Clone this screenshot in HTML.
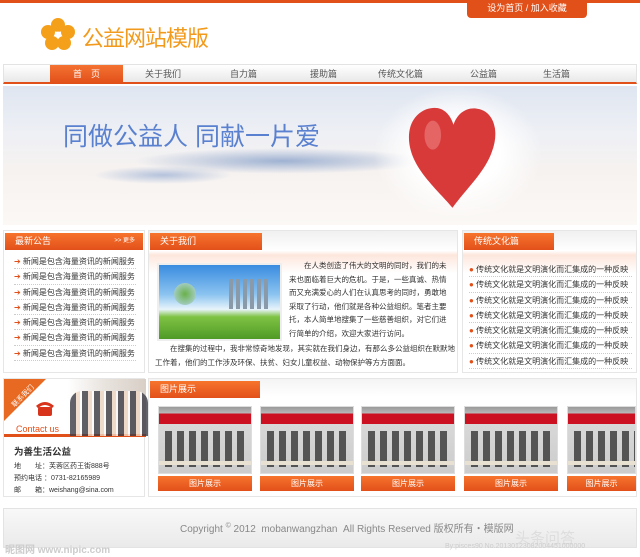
<!DOCTYPE html>
<html><head><meta charset="utf-8"><style>
*{margin:0;padding:0;box-sizing:border-box}
body{width:640px;height:557px;overflow:hidden;background:#fff;font-family:"Liberation Sans","Noto Sans CJK SC",sans-serif;position:relative;font-size:8px;color:#333}
.a{position:absolute}
.hd{background:linear-gradient(#f7742d,#e2501a);color:#fff;font-size:9px;line-height:17px;padding-left:10px}
.box{border:1px solid #e6e6e6;background:#fff}
.li{height:15.3px;border-bottom:1px dotted #ccc;line-height:15px;font-size:8px;color:#333;white-space:nowrap;overflow:hidden}
.pic{width:94px;height:85px}
.ph{height:68px;background:linear-gradient(#999 0,#bbb 10%,#c12 10%,#c12 26%,#d8d8d8 26%,#ccc 100%);position:relative;overflow:hidden;border:1px solid #ddd}
.ph:after{content:"";position:absolute;left:6px;top:24px;width:80px;height:36px;background:repeating-linear-gradient(90deg,#2a2a2a 0 7px,transparent 7px 12px);opacity:.75}
.ph:before{content:"";position:absolute;left:0;top:54px;width:100%;height:4px;background:#e8e0d0;z-index:2}
.cap{height:15px;background:linear-gradient(#f7742d,#e2501a);color:#fff;text-align:center;line-height:15px;font-size:8px;margin-top:2px}
</style></head><body>
<div class="a" style="left:0;top:0;width:640px;height:3px;background:#e2501a"></div>
<div class="a" style="left:467px;top:0;width:120px;height:18px;background:#e2501a;border-radius:0 0 4px 4px;color:#fff;font-size:9px;text-align:center;line-height:17px">设为首页 / 加入收藏</div>
<svg class="a" style="left:40px;top:17px" width="36" height="34" viewBox="0 0 36 34"><g fill="#f5a01a"><circle cx="18" cy="8" r="7"/><circle cx="8" cy="15" r="7"/><circle cx="28" cy="15" r="7"/><circle cx="12" cy="26" r="7"/><circle cx="24" cy="26" r="7"/></g><circle cx="18" cy="17" r="3" fill="#fff" opacity=".4"/></svg>
<div class="a" style="left:82px;top:21px;font-size:22px;color:#f29a1c;letter-spacing:-1px">公益网站模版</div>
<div class="a" style="left:3px;top:64px;width:634px;height:20px;background:linear-gradient(#fff,#e8e8e8);border:1px solid #e3e3e3;border-bottom:2px solid #e2501a"></div>
<div class="a" style="left:50px;top:65px;width:73px;height:18px;background:linear-gradient(#f47232,#e2501a);color:#fff;font-size:9px;text-align:center;line-height:18px">首　页</div>
<div class="a" style="top:66px;left:0;width:640px;font-size:9px;color:#555;line-height:16px">
<span class="a" style="left:145px">关于我们</span><span class="a" style="left:230px">自力篇</span><span class="a" style="left:310px">援助篇</span><span class="a" style="left:378px">传统文化篇</span><span class="a" style="left:470px">公益篇</span><span class="a" style="left:543px">生活篇</span></div>
<div class="a" style="left:3px;top:86px;width:634px;height:139px;background:linear-gradient(#dfe6f1 0%,#eef0f5 35%,#f6f2f0 60%,#fbf8f5 100%);overflow:hidden">
<div class="a" style="left:130px;top:62px;width:300px;height:26px;background:radial-gradient(ellipse,#9fb2d2 0%,rgba(170,185,215,0) 70%)"></div>
<div class="a" style="left:90px;top:80px;width:140px;height:18px;background:radial-gradient(ellipse,#b4c2dc 0%,rgba(170,185,215,0) 70%)"></div>
<div class="a" style="left:60px;top:31px;font-size:25px;color:#5a80d0;letter-spacing:0px;white-space:nowrap">同做公益人 同献一片爱</div>
<div class="a" style="left:370px;top:0px;width:170px;height:135px;background:radial-gradient(ellipse,#fff 35%,rgba(255,255,255,0) 70%)"></div>
<svg class="a" style="left:400px;top:18px" width="100" height="112" viewBox="0 0 95 108"><path d="M47 100 C30 80 5 60 5 32 C5 12 20 2 33 4 C42 6 46 14 48 20 C52 8 62 2 73 5 C88 9 92 28 85 46 C78 66 60 82 47 100Z" fill="#d83a3a"/><ellipse cx="28" cy="30" rx="8" ry="14" fill="#ee8080" opacity=".6"/></svg>
</div>
<!-- left news -->
<div class="a box" style="left:3px;top:230px;width:142px;height:143px">
<div class="hd" style="margin:2px 1px 0;height:17px;font-size:9px">最新公告<span style="float:right;font-size:6px;padding-right:8px">&gt;&gt; 更多</span></div>
<div style="padding:4px 8px 0 10px">
<div class="li"><span style="color:#e2501a">➔</span> 新闻是包含海量资讯的新闻服务</div><div class="li"><span style="color:#e2501a">➔</span> 新闻是包含海量资讯的新闻服务</div><div class="li"><span style="color:#e2501a">➔</span> 新闻是包含海量资讯的新闻服务</div><div class="li"><span style="color:#e2501a">➔</span> 新闻是包含海量资讯的新闻服务</div><div class="li"><span style="color:#e2501a">➔</span> 新闻是包含海量资讯的新闻服务</div><div class="li"><span style="color:#e2501a">➔</span> 新闻是包含海量资讯的新闻服务</div><div class="li"><span style="color:#e2501a">➔</span> 新闻是包含海量资讯的新闻服务</div>
</div></div>
<!-- about -->
<div class="a box" style="left:148px;top:230px;width:310px;height:143px;background:linear-gradient(#f0f0f0 0,#fff 14%,#fde6dc 17%,#fff 30%)">
<div class="hd a" style="left:1px;top:2px;width:112px;height:17px">关于我们</div>
<div class="a" style="left:8px;top:32px;width:125px;height:78px;border:2px solid #eee;background:linear-gradient(#3a8ce0 0%,#8cc4f0 40%,#e8f4fb 60%,#7fc344 70%,#4f9a26 100%)"></div>
<div class="a" style="left:80px;top:48px;width:40px;height:30px;background:repeating-linear-gradient(90deg,#8a9aa8 0 4px,transparent 4px 7px)"></div>
<div class="a" style="left:25px;top:52px;width:22px;height:22px;border-radius:50%;background:radial-gradient(#6ab04a,#b9d8ef)"></div>
<div class="a" style="left:140px;top:28px;width:164px;font-size:7.5px;line-height:13.5px;text-indent:2em;color:#333">在人类创造了伟大的文明的同时，我们的未来也面临着巨大的危机。于是，一些真诚、热情而又充满爱心的人们在认真思考的同时，勇敢地采取了行动，他们就是各种公益组织。笔者主要托，本人简单地搜集了一些慈善组织，对它们进行简单的介绍，欢迎大家进行访问。</div>
<div class="a" style="left:6px;top:111px;width:300px;font-size:7.5px;line-height:13.5px;text-indent:2em;color:#333">在搜集的过程中，我非常惊奇地发现，其实就在我们身边，有那么多公益组织在默默地工作着，他们的工作涉及环保、扶贫、妇女儿童权益、动物保护等方方面面。</div>
</div>
<!-- right -->
<div class="a box" style="left:462px;top:230px;width:175px;height:143px;background:linear-gradient(#f0f0f0 0,#fff 14%,#fde6dc 17%,#fff 30%)">
<div class="hd a" style="left:1px;top:2px;width:90px;height:17px">传统文化篇</div>
<div style="padding:31px 4px 0 6px">
<div class="li"><span style="color:#e2501a">●</span> 传统文化就是文明演化而汇集成的一种反映</div><div class="li"><span style="color:#e2501a">●</span> 传统文化就是文明演化而汇集成的一种反映</div><div class="li"><span style="color:#e2501a">●</span> 传统文化就是文明演化而汇集成的一种反映</div><div class="li"><span style="color:#e2501a">●</span> 传统文化就是文明演化而汇集成的一种反映</div><div class="li"><span style="color:#e2501a">●</span> 传统文化就是文明演化而汇集成的一种反映</div><div class="li"><span style="color:#e2501a">●</span> 传统文化就是文明演化而汇集成的一种反映</div><div class="li"><span style="color:#e2501a">●</span> 传统文化就是文明演化而汇集成的一种反映</div>
</div></div>
<!-- contact -->
<div class="a box" style="left:3px;top:378px;width:142px;height:119px">
<div class="a" style="left:0;top:0;width:142px;height:58px;background:linear-gradient(90deg,#fff 45%,#e9e4df 70%,#d8cfc6);border-bottom:3px solid #e2501a"></div>
<div class="a" style="left:66px;top:12px;width:78px;height:45px;background:repeating-linear-gradient(90deg,#3a3a44 0 6px,#f0d8c4 6px 10px,#fff 10px 12px);opacity:.8;border-radius:12px 12px 0 0"></div>
<svg class="a" style="left:32px;top:22px" width="18" height="16" viewBox="0 0 18 16"><rect x="2" y="6" width="14" height="9" rx="2" fill="#d8341c"/><path d="M1 6 Q9 -1 17 6" stroke="#d8341c" stroke-width="3" fill="none"/></svg>
<div class="a" style="left:12px;top:45px;font-size:9px;color:#e2501a">Contact us</div>
<div class="a" style="left:0;top:0;width:0;height:0;border-top:42px solid #e86a22;border-right:42px solid transparent"></div>
<div class="a" style="left:5px;top:12px;font-size:7px;color:#fff;transform:rotate(-45deg)">联系我们</div>
<div class="a" style="left:10px;top:65px;font-size:9.5px;font-weight:bold;color:#333">为善生活公益</div>
<div class="a" style="left:10px;top:82px;font-size:7px;line-height:12px;color:#333">地　　址：芙蓉区药王街888号<br>预约电话 ：0731-82165989<br>邮　　箱：weishang@sina.com</div>
</div>
<!-- pictures -->
<div class="a box" style="left:148px;top:378px;width:489px;height:119px;background:linear-gradient(#f4f4f4 0,#fff 15%)">
<div class="hd a" style="left:1px;top:2px;width:110px;height:17px">图片展示</div>
<div class="a pic" style="left:9px;top:27px"><div class="ph"></div><div class="cap">图片展示</div></div>
<div class="a pic" style="left:111px;top:27px"><div class="ph"></div><div class="cap">图片展示</div></div>
<div class="a pic" style="left:212px;top:27px"><div class="ph"></div><div class="cap">图片展示</div></div>
<div class="a pic" style="left:315px;top:27px"><div class="ph"></div><div class="cap">图片展示</div></div>
<div class="a pic" style="left:418px;top:27px;width:69px"><div class="ph"></div><div class="cap">图片展示</div></div>
</div>
<!-- footer -->
<div class="a" style="left:3px;top:508px;width:634px;height:40px;background:linear-gradient(#f8f8f8,#eaeaea);border:1px solid #e3e3e3"></div>
<div class="a" style="left:180px;top:520px;font-size:10px;color:#888;white-space:nowrap">Copyright <sup style="font-size:7px">©</sup> 2012 &nbsp;mobanwangzhan &nbsp;All Rights Reserved 版权所有・模版网</div>
<div class="a" style="left:5px;top:541px;font-size:10px;color:#ccc;font-weight:bold">昵图网 www.nipic.com</div>
<div class="a" style="left:515px;top:527px;font-size:15px;color:#ddd">头条问答</div>
<div class="a" style="left:445px;top:543px;font-size:7px;color:#ccc;white-space:nowrap">By:pisces90 No.20130123082004451000000</div>
</body></html>
